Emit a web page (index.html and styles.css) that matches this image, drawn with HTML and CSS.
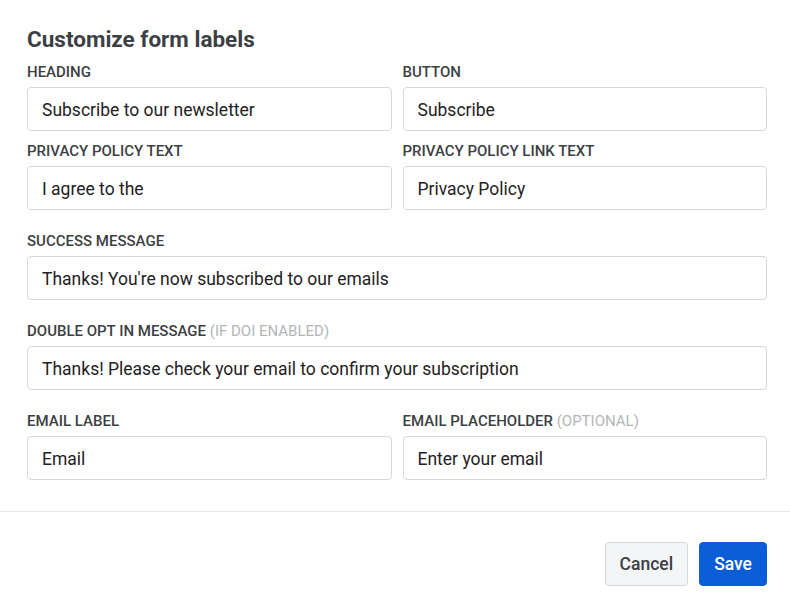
FILE: index.html
```html
<!DOCTYPE html>
<html lang="en">
<head>
    <meta charset="UTF-8">
    <meta name="viewport" content="width=device-width, initial-scale=1.0">
    <title>Customize form labels</title>
    <link rel="stylesheet" href="styles.css">
</head>
<body>

    <div class="modal">
        <div class="modal-body">
            <h1>Customize form labels</h1>

            <!-- Heading / button + privacy texts -->
            <div class="grid">
                <div class="field">
                    <label>Heading</label>
                    <input type="text" value="Subscribe to our newsletter">
                </div>
                <div class="field">
                    <label>Button</label>
                    <input type="text" value="Subscribe">
                </div>
                <div class="field">
                    <label>Privacy policy text</label>
                    <input type="text" value="I agree to the">
                </div>
                <div class="field">
                    <label>Privacy policy link text</label>
                    <input type="text" value="Privacy Policy">
                </div>
            </div>

            <div class="field spaced">
                <label>Success message</label>
                <input type="text" value="Thanks! You're now subscribed to our emails">
            </div>

            <div class="field spaced">
                <label>Double opt in message <span class="hint">(If DOI enabled)</span></label>
                <input type="text" value="Thanks! Please check your email to confirm your subscription">
            </div>

            <div class="grid spaced">
                <div class="field">
                    <label>Email label</label>
                    <input type="text" value="Email">
                </div>
                <div class="field">
                    <label>Email placeholder <span class="hint">(Optional)</span></label>
                    <input type="text" value="Enter your email">
                </div>
            </div>
        </div>

        <div class="modal-footer">
            <button class="btn btn-cancel">Cancel</button>
            <button class="btn btn-save">Save</button>
        </div>
    </div>

</body>
</html>
```

FILE: styles.css
```css
body {
    margin: 0;
    font-family: Roboto, 'Liberation Sans', Arial, sans-serif;
    background-color: #ffffff;
    color: #1f2124;
}

.modal-body {
    padding: 25px 23px 0 27px;
}

h1 {
    font-size: 22.5px;
    line-height: 28px;
    font-weight: 700;
    color: #3c3f44;
    margin: 0 0 11px 0;
}

.grid {
    display: grid;
    grid-template-columns: 1fr 1fr;
    column-gap: 11px;
    row-gap: 12px;
}

.spaced {
    margin-top: 23px;
}

.field {
    display: flex;
    flex-direction: column;
}

.field label {
    font-size: 15px;
    line-height: 16px;
    font-weight: 500;
    text-transform: uppercase;
    color: #3c3f44;
    margin-bottom: 7px;
}

.hint {
    font-weight: 400;
    color: #b3b6ba;
}

.field input {
    height: 44px;
    box-sizing: border-box;
    padding: 2px 14px 0 14px;
    font-family: inherit;
    font-size: 17.5px;
    color: #1f2124;
    border: 1px solid #d5d7da;
    border-radius: 4px;
    background-color: #ffffff;
    outline: none;
}

.modal-footer {
    margin-top: 31px;
    border-top: 1px solid #e6e8eb;
    padding: 30px 23px 0 0;
    display: flex;
    justify-content: flex-end;
    gap: 11px;
}

.btn {
    height: 44px;
    padding: 0 14px;
    font-family: inherit;
    font-size: 17.5px;
    font-weight: 500;
    border-radius: 4px;
    cursor: pointer;
}

.btn-cancel {
    background-color: #f4f5f7;
    color: #3c3f44;
    border: 1px solid #d5d7da;
}

.btn-save {
    background-color: #0b5cd7;
    color: #ffffff;
    border: 1px solid #0b5cd7;
}
```
